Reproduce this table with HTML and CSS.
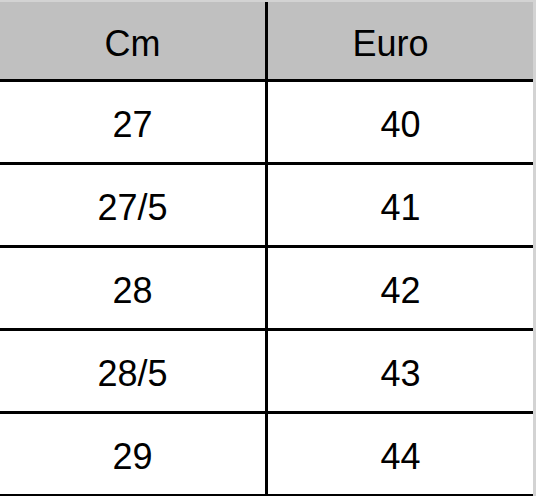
FILE: index.html
```html
<!DOCTYPE html>
<html>
<head>
<meta charset="utf-8">
<link rel="stylesheet" href="styles.css">
</head>
<body>
<div class="sheet">
  <div class="grid">
    <div class="cell head">Cm</div>
    <div class="cell head euro">Euro</div>
    <div class="cell">27</div>
    <div class="cell">40</div>
    <div class="cell">27/5</div>
    <div class="cell">41</div>
    <div class="cell">28</div>
    <div class="cell">42</div>
    <div class="cell">28/5</div>
    <div class="cell">43</div>
    <div class="cell">29</div>
    <div class="cell">44</div>
  </div>
</div>
</body>
</html>
```

FILE: styles.css
```css
html, body {
  margin: 0;
  padding: 0;
  background: #d3d3d3;
}
.sheet {
  padding-top: 2px;
  width: 533px;
}
.grid {
  display: grid;
  grid-template-columns: 265px 265px;
  grid-template-rows: 77px;
  grid-auto-rows: 80px;
  gap: 3px;
  padding-bottom: 3px;
  background: #000;
  font-family: "Liberation Sans", Arial, sans-serif;
  font-size: 36px;
  color: #000;
}
.cell {
  background: #fff;
  text-align: center;
  box-sizing: border-box;
  padding-top: 6px;
  line-height: 74px;
}
.head {
  background: #c0c0c0;
  line-height: 71px;
}
.euro {
  padding-right: 20px;
}
```
